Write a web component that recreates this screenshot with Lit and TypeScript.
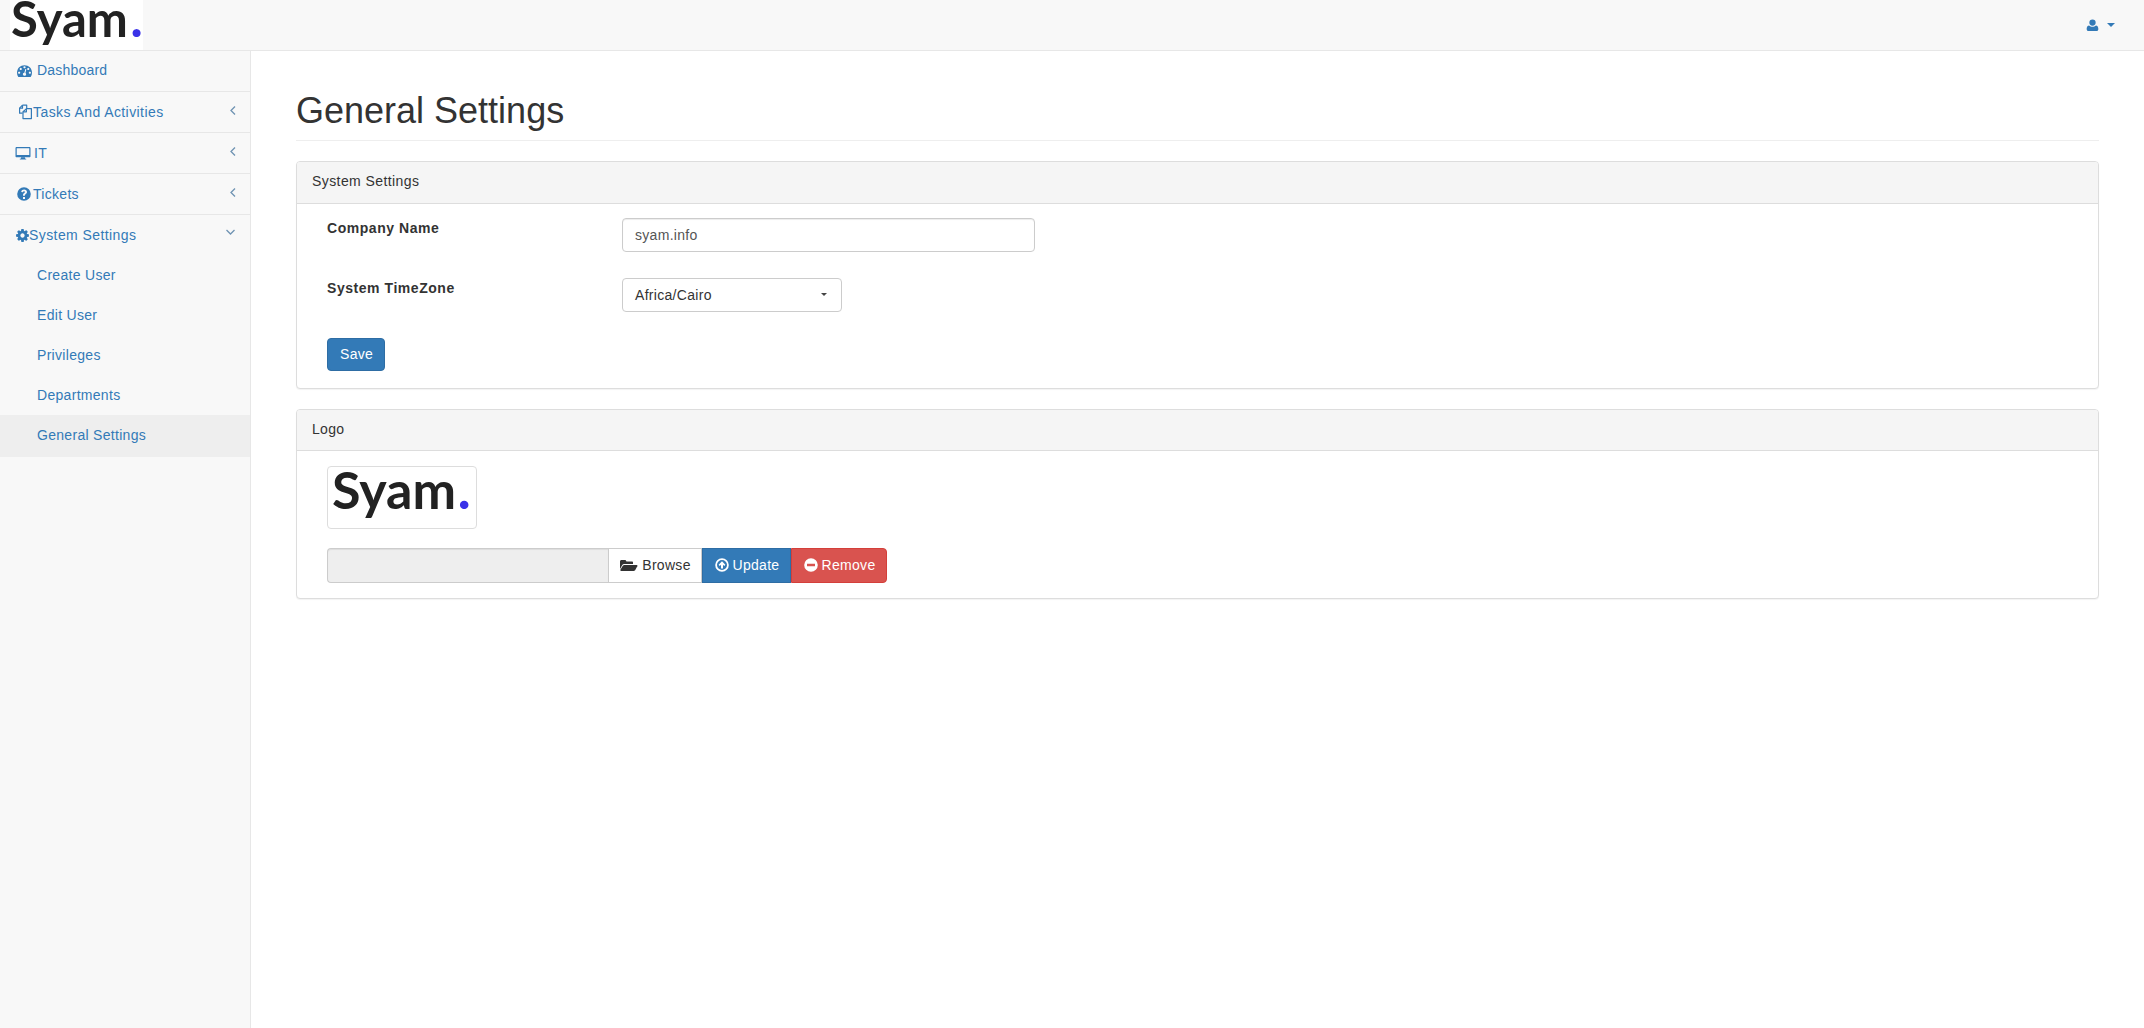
import { LitElement, html, css, svg } from "lit";
import { customElement } from "lit/decorators.js";

const ic = (d: any, w: number, h: number, vb = "0 0 1792 1792", cls = "") =>
  html`<svg class="ic ${cls}" width=${w} height=${h} viewBox=${vb} fill="currentColor">${d}</svg>`;

const gauge = svg`<path d="M384 1152q0-53-37.5-90.5t-90.5-37.5-90.5 37.5-37.5 90.5 37.5 90.5 90.5 37.5 90.5-37.5 37.5-90.5zm192-448q0-53-37.5-90.5t-90.5-37.5-90.5 37.5-37.5 90.5 37.5 90.5 90.5 37.5 90.5-37.5 37.5-90.5zm428 481l101-382q6-26-7.5-48.5t-38.5-29.5-48 6.5-30 39.5l-101 382q-60 5-107 43.5t-63 98.5q-20 77 20 146t117 89 146-20 89-117q16-60-6-117t-72-91zm660-33q0-53-37.5-90.5t-90.5-37.5-90.5 37.5-37.5 90.5 37.5 90.5 90.5 37.5 90.5-37.5 37.5-90.5zm-640-640q0-53-37.5-90.5t-90.5-37.5-90.5 37.5-37.5 90.5 37.5 90.5 90.5 37.5 90.5-37.5 37.5-90.5zm448 192q0-53-37.5-90.5t-90.5-37.5-90.5 37.5-37.5 90.5 37.5 90.5 90.5 37.5 90.5-37.5 37.5-90.5zm320 448q0 261-141 483-19 29-54 29h-1402q-35 0-54-29-141-221-141-483 0-182 71-348t191-286 286-191 348-71 348 71 286 191 191 286 71 348z"/>`;
const cog = svg`<path d="M1152 896q0-106-75-181t-181-75-181 75-75 181 75 181 181 75 181-75 75-181zm512-109v222q0 12-8 23t-20 13l-185 28q-19 54-39 91 35 50 107 138 10 12 10 25t-9 23q-27 37-99 108t-94 71q-12 0-26-9l-138-108q-44 23-91 38-16 136-29 186-7 28-36 28h-222q-14 0-24.5-8.5t-11.5-21.5l-28-184q-49-16-90-37l-141 107q-10 9-25 9-14 0-25-11-126-114-165-168-7-10-7-23 0-12 8-23 15-21 51-66.5t54-70.5q-27-50-41-99l-183-27q-13-2-21-12.5t-8-23.5v-222q0-12 8-23t19-13l186-28q14-46 39-92-40-57-107-138-10-12-10-24 0-10 9-23 26-36 98.5-107.5t94.5-71.5q13 0 26 10l138 107q44-23 91-38 16-136 29-186 7-28 36-28h222q14 0 24.5 8.5t11.5 21.5l28 184q49 16 90 37l142-107q9-9 24-9 13 0 25 10 129 119 165 170 7 8 7 22 0 12-8 23-15 21-51 66.5t-54 70.5q26 50 41 98l183 28q13 2 21 12.5t8 23.5z"/>`;
const files = svg`<g fill="none" stroke="currentColor" stroke-width="1.2" stroke-linejoin="round"><path d="M5.5 1.2h4.2v3.2M5.5 1.2L2.600 4.200v5h3"/><path d="M9.600 4.600h4.800v10h-8.400v-6.800z"/><path d="M5.500 1.200v3h-2.900M9.400 4.600v3.200H6"/></g>`;
const desktop = svg`<path fill-rule="evenodd" d="M1.200 1h13.600c.7 0 1.200.5 1.200 1.200v8.600c0 .7-.5 1.200-1.200 1.200H1.200C.5 12 0 11.500 0 10.800V2.200C0 1.500.5 1 1.200 1zM1.300 2.300v7.400h13.400V2.300z"/><path d="M6 12h4l.4 1.600h1v.9H4.600v-.9h1z"/>`;
const question = svg`<path fill-rule="evenodd" d="M7 .2a6.800 6.800 0 1 0 0 13.600A6.800 6.800 0 0 0 7 .2zM6 10h2v1.900H6zM4.200 4.900C4.500 3.300 5.700 2.500 7.100 2.500c1.600 0 2.900 1 2.900 2.500 0 1.200-.7 1.700-1.400 2.200-.5.300-.7.600-.7 1.100v.4H6v-.6c0-1 .5-1.600 1.200-2.100.5-.3.800-.6.800-1 0-.5-.4-.8-.9-.8s-1 .3-1.200 1.100z"/>`;
const user = svg`<path d="M7 .5a3.400 3.400 0 1 1 0 6.800 3.400 3.400 0 0 1 0-6.800zM3.300 6.900C4.300 7.900 5.600 8.300 7 8.300s2.700-.4 3.700-1.400c1.700.2 2.600 1.700 2.600 3.900 0 1.400-.8 2.200-2 2.200H2.700c-1.200 0-2-.8-2-2.200 0-2.200.9-3.700 2.600-3.900z"/>`;
const folder = svg`<path d="M1.500 2h4l1 1.500h5.500c.6 0 1 .4 1 1V6H4.200c-.9 0-1.500.4-1.900 1.100L0 11V3.500C0 2.600.6 2 1.500 2z"/><path d="M4.300 7H16.500c.8 0 1.100.6.800 1.200l-2.200 4c-.4.600-.9.800-1.500.8H1.200c-.8 0-1.100-.6-.8-1.200l2.400-4C3.200 7.200 3.700 7 4.300 7z"/>`;
const upCircle = svg`<path fill-rule="evenodd" d="M7 .2a6.800 6.800 0 1 0 0 13.600A6.800 6.800 0 0 0 7 .2zm0 1.800a5 5 0 1 1 0 10 5 5 0 0 1 0-10z"/><path d="M7 3.200l3.400 3.500-1.200 1.200L8 6.700v3.800H6V6.700L4.800 7.900 3.600 6.700z"/>`;
const minus = svg`<path fill-rule="evenodd" d="M7 .2a6.800 6.800 0 1 0 0 13.600A6.800 6.800 0 0 0 7 .2zM3 5.800h8v2.400H3z"/>`;
const chevL = svg`<path d="M6 1.500L2 5.500l4 4" fill="none" stroke="currentColor" stroke-width="1.300"/>`;
const chevD = svg`<path d="M1.500 3l4 4 4-4" fill="none" stroke="currentColor" stroke-width="1.300"/>`;

@customElement("app-root")
export class AppRoot extends LitElement {
  static styles = css`
    :host {
      display: block;
      min-height: 1028px;
      background: #fff;
      font-family: "Liberation Sans", Arial, sans-serif;
      font-size: 14px;
      line-height: 20px;
      color: #333;
      letter-spacing: 0.3px;
    }
    * { box-sizing: border-box; }
    .ic { display: block; flex: none; }
    .navbar {
      height: 51px;
      background: #f8f8f8;
      border-bottom: 1px solid #e7e7e7;
      display: flex;
      justify-content: space-between;
      align-items: flex-start;
    }
    .brand {
      width: 133px;
      height: 50px;
      background: #fff;
      margin-left: 10px;
      padding-left: 1px;
    }
    .logo {
      display: block;
      font-family: Lato, "Open Sans", sans-serif;
      font-weight: 700;
      letter-spacing: 0;
      color: #222;
      white-space: nowrap;
    }
    .logo b { color: #3a32e8; font-weight: 900; margin-left: 2px; }
    .brand .logo { font-size: 49px; line-height: 36px; }
    .brand .logo b { margin-left: 3px; }
    .usermenu {
      color: #337ab7;
      display: flex;
      align-items: center;
      gap: 8px;
      height: 50px;
      padding-right: 29px;
    }
    .caret {
      width: 0; height: 0;
      border-left: 4px solid transparent;
      border-right: 4px solid transparent;
      border-top: 4px solid currentColor;
    }
    .layout { display: flex; min-height: 977px; }
    .sidebar {
      width: 251px;
      flex: none;
      background: #f8f8f8;
      border-right: 1px solid #e7e7e7;
    }
    .item {
      height: 41px;
      border-bottom: 1px solid #e7e7e7;
      display: flex;
      align-items: center;
      color: #337ab7;
      position: relative;
      padding-left: 17px;
    }
    .item.first { padding-bottom: 2px; letter-spacing: 0.2px; }
    .item .label { white-space: nowrap; }
    .wide { letter-spacing: 0.42px; }
    .iconbox { display: flex; justify-content: flex-start; }
    .w22 { width: 20px; }
    .w18 { width: 16px; }
    .desk { padding-left: 15px; }
    .w20 { width: 19px; }
    .chev { position: absolute; right: 12px; top: 13px; color: #6f93b3; }
    .chev.down { right: 14px; top: 12px; }
    .open { height: auto; display: block; padding: 0; border-bottom: none; }
    .open-head {
      display: flex; align-items: center; height: 40px; padding-left: 15px; position: relative;
    }
    .w14 { width: 14px; }
    .sub {
      height: 40px;
      padding-left: 37px;
      display: flex;
      align-items: center;
      color: #337ab7;
    }
    .sub.active { background: #eee; height: 42px; padding-bottom: 3px; }
    .main { flex: 1; padding: 0 45px; min-width: 0; }
    h1 {
      margin: 40px 0 20px;
      padding-bottom: 9px;
      border-bottom: 1px solid #eee;
      font-size: 36px;
      font-weight: 500;
      line-height: 39.6px;
      letter-spacing: 0;
      color: #333;
    }
    .panel {
      border: 1px solid #ddd;
      border-radius: 4px;
      box-shadow: 0 1px 1px rgba(0, 0, 0, 0.05);
      margin-bottom: 20px;
      background: #fff;
    }
    .panel-head {
      height: 42px;
      background: #f5f5f5;
      border-bottom: 1px solid #ddd;
      border-radius: 3px 3px 0 0;
      padding: 9px 15px;
    }
    .panel-head.short { height: 41px; }
    .form { padding: 14px 30px 17px; }
    .row { display: grid; grid-template-columns: 295px 1fr; margin-bottom: 26px; }
    label { font-weight: 700; letter-spacing: 0.55px; }
    .ctl {
      display: block;
      height: 34px;
      border: 1px solid #ccc;
      border-radius: 4px;
      padding: 6px 12px;
      font: inherit;
      letter-spacing: inherit;
      color: #555;
      background: #fff;
      box-shadow: inset 0 1px 1px rgba(0, 0, 0, 0.075);
    }
    input.ctl { width: 413px; outline: none; }
    .select {
      width: 220px;
      display: flex;
      align-items: center;
      justify-content: space-between;
      color: #333;
      box-shadow: none;
      padding-right: 14px;
    }
    .select .caret { border-left-width: 3px; border-right-width: 3px; border-top-width: 3px; color: #444; }
    .btn {
      display: inline-flex;
      align-items: center;
      height: 34px;
      border: 1px solid transparent;
      padding: 6px 12px;
      color: #fff;
      white-space: nowrap;
      gap: 4px;
    }
    .primary { background: #337ab7; border-color: #2e6da4; }
    .save { border-radius: 4px; height: 33px; width: 58px; }
    .logo-body { padding: 15px 30px 15px; }
    .thumb {
      width: 150px;
      height: 63px;
      border: 1px solid #ddd;
      border-radius: 4px;
      background: #fff;
      padding-left: 4px;
      margin-bottom: 19px;
    }
    .thumb .logo { font-size: 52px; line-height: 45px; }
    .filegroup { display: flex; height: 35px; width: 560px; }
    .filegroup .fake {
      width: 281px;
      background: #eee;
      border: 1px solid #ccc;
      border-right: none;
      border-radius: 4px 0 0 4px;
      box-shadow: inset 0 1px 1px rgba(0, 0, 0, 0.075);
    }
    .filegroup .btn { height: 35px; justify-content: center; padding: 6px 0 6px 1px; }
    .browse { width: 94px; background: #fff; border-color: #ccc; color: #333; }
    .btn.update { width: 89px; border-radius: 0; }
    .btn.remove { width: 96px; background: #d9534f; border-color: #d43f3a; border-radius: 0 4px 4px 0; }
  `;

  render() {
    const logo = html`<span class="logo">Syam<b>.</b></span>`;
    return html`
      <div class="navbar">
        <div class="brand">${logo}</div>
        <div class="usermenu">${ic(user, 13, 13, "0 0 14 14")}<span class="caret"></span></div>
      </div>
      <div class="layout">
        <nav class="sidebar">
          <div class="item first"><span class="iconbox w22">${ic(gauge, 15, 15)}</span><span class="label">Dashboard</span></div>
          <div class="item"><span class="iconbox w18">${ic(files, 16, 16, "0 0 16 16")}</span><span class="label wide">Tasks And Activities</span>${ic(chevL, 10, 11, "0 0 8 11", "chev")}</div>
          <div class="item desk"><span class="iconbox w20">${ic(desktop, 16, 15, "0 0 16 16")}</span><span class="label">IT</span>${ic(chevL, 10, 11, "0 0 8 11", "chev")}</div>
          <div class="item"><span class="iconbox w18">${ic(question, 14, 14, "0 0 14 14")}</span><span class="label">Tickets</span>${ic(chevL, 10, 11, "0 0 8 11", "chev")}</div>
          <div class="item open">
            <div class="open-head"><span class="iconbox w14">${ic(cog, 15, 15)}</span><span class="label wide">System Settings</span>${ic(chevD, 11, 11, "0 0 11 11", "chev down")}</div>
            <div class="sub">Create User</div>
            <div class="sub">Edit User</div>
            <div class="sub">Privileges</div>
            <div class="sub">Departments</div>
            <div class="sub active">General Settings</div>
          </div>
        </nav>
        <main class="main">
          <h1>General Settings</h1>
          <section class="panel">
            <div class="panel-head wide">System Settings</div>
            <div class="form">
              <div class="row"><label>Company Name</label><input class="ctl" .value=${"syam.info"} /></div>
              <div class="row"><label>System TimeZone</label><div class="ctl select"><span>Africa/Cairo</span><span class="caret"></span></div></div>
              <div class="btn primary save">Save</div>
            </div>
          </section>
          <section class="panel">
            <div class="panel-head short">Logo</div>
            <div class="logo-body">
              <div class="thumb">${logo}</div>
              <div class="filegroup">
                <div class="fake"></div>
                <div class="btn browse">${ic(folder, 18, 15, "0 0 18 15")}Browse</div>
                <div class="btn primary update">${ic(upCircle, 14, 14, "0 0 14 14")}Update</div>
                <div class="btn remove">${ic(minus, 14, 14, "0 0 14 14")}Remove</div>
              </div>
            </div>
          </section>
        </main>
      </div>
    `;
  }
}
